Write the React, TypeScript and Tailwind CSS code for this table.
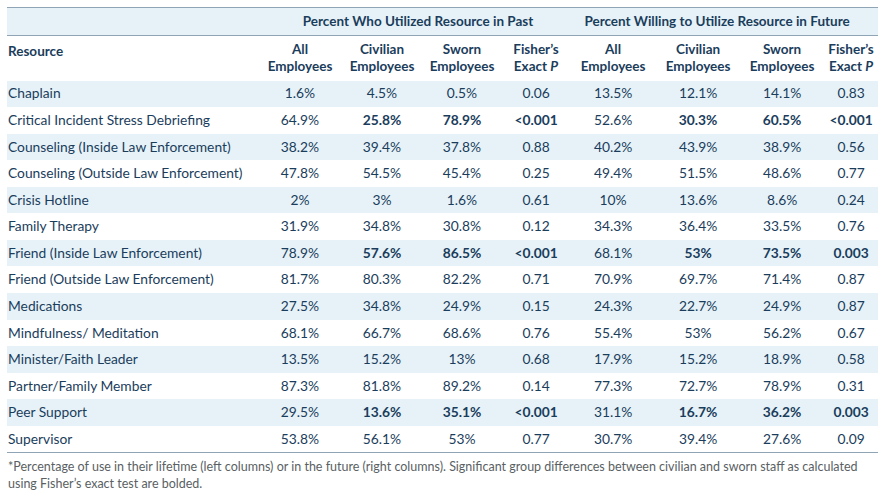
const rows: [string, string[], boolean][] = [
  ["Chaplain", ["1.6%", "4.5%", "0.5%", "0.06", "13.5%", "12.1%", "14.1%", "0.83"], false],
  ["Critical Incident Stress Debriefing", ["64.9%", "25.8%", "78.9%", "<0.001", "52.6%", "30.3%", "60.5%", "<0.001"], true],
  ["Counseling (Inside Law Enforcement)", ["38.2%", "39.4%", "37.8%", "0.88", "40.2%", "43.9%", "38.9%", "0.56"], false],
  ["Counseling (Outside Law Enforcement)", ["47.8%", "54.5%", "45.4%", "0.25", "49.4%", "51.5%", "48.6%", "0.77"], false],
  ["Crisis Hotline", ["2%", "3%", "1.6%", "0.61", "10%", "13.6%", "8.6%", "0.24"], false],
  ["Family Therapy", ["31.9%", "34.8%", "30.8%", "0.12", "34.3%", "36.4%", "33.5%", "0.76"], false],
  ["Friend (Inside Law Enforcement)", ["78.9%", "57.6%", "86.5%", "<0.001", "68.1%", "53%", "73.5%", "0.003"], true],
  ["Friend (Outside Law Enforcement)", ["81.7%", "80.3%", "82.2%", "0.71", "70.9%", "69.7%", "71.4%", "0.87"], false],
  ["Medications", ["27.5%", "34.8%", "24.9%", "0.15", "24.3%", "22.7%", "24.9%", "0.87"], false],
  ["Mindfulness/ Meditation", ["68.1%", "66.7%", "68.6%", "0.76", "55.4%", "53%", "56.2%", "0.67"], false],
  ["Minister/Faith Leader", ["13.5%", "15.2%", "13%", "0.68", "17.9%", "15.2%", "18.9%", "0.58"], false],
  ["Partner/Family Member", ["87.3%", "81.8%", "89.2%", "0.14", "77.3%", "72.7%", "78.9%", "0.31"], false],
  ["Peer Support", ["29.5%", "13.6%", "35.1%", "<0.001", "31.1%", "16.7%", "36.2%", "0.003"], true],
  ["Supervisor", ["53.8%", "56.1%", "53%", "0.77", "30.7%", "39.4%", "27.6%", "0.09"], false],
];

function Head({ top, bottom }: { top: string; bottom: React.ReactNode }) {
  return (
    <th className="text-center font-bold align-middle leading-[17px] text-[13.5px]">
      {top}
      <br />
      {bottom}
    </th>
  );
}

export default function App() {
  return (
    <div className="bg-white w-[886px] h-[500px] pt-[7px] pl-[7px] text-[#1b3d5c]" style={{ fontFamily: "Lato, 'Noto Sans', sans-serif" }}>
      <table className="table-fixed border-collapse w-[871px] text-[13.8px]">
        <colgroup>
          <col className="w-[251px]" />
          <col className="w-[84px]" />
          <col className="w-[80px]" />
          <col className="w-[80px]" />
          <col className="w-[68px]" />
          <col className="w-[86px]" />
          <col className="w-[84px]" />
          <col className="w-[84px]" />
          <col className="w-[54px]" />
        </colgroup>
        <thead>
          <tr className="h-[28px] bg-[#e6f2f8] border-y border-[#8fa4b4] text-[13.5px]">
            <th />
            <th colSpan={4} className="font-bold text-center pl-[8px]">Percent Who Utilized Resource in Past</th>
            <th colSpan={4} className="font-bold text-center pr-[14px]">Percent Willing to Utilize Resource in Future</th>
          </tr>
          <tr className="h-[45px]">
            <th className="text-left font-bold pl-[1px] pb-[14px] text-[13.5px]">Resource</th>
            <Head top="All" bottom="Employees" />
            <Head top="Civilian" bottom="Employees" />
            <Head top="Sworn" bottom="Employees" />
            <Head top="Fisher’s" bottom={<>Exact <i>P</i></>} />
            <Head top="All" bottom="Employees" />
            <Head top="Civilian" bottom="Employees" />
            <Head top="Sworn" bottom="Employees" />
            <Head top="Fisher’s" bottom={<>Exact <i>P</i></>} />
          </tr>
        </thead>
        <tbody className="border-b border-[#8fa4b4]">
          {rows.map(([name, vals, bold], i) => (
            <tr key={name} className={`h-[26.57px] ${i % 2 === 0 ? "bg-[#e6f2f8]" : "bg-white"}`}>
              <td className="pl-[1px]">{name}</td>
              {vals.map((v, j) => (
                <td key={j} className={`text-center ${bold && j !== 0 && j !== 4 ? "font-bold" : ""}`}>{v}</td>
              ))}
            </tr>
          ))}
        </tbody>
      </table>
      <p className="mt-[5px] pl-[1px] w-[875px] text-[12.5px] leading-[17px] text-[#5a5f64]">
        *Percentage of use in their lifetime (left columns) or in the future (right columns). Significant group differences between civilian and sworn staff as calculated using Fisher’s exact test are bolded.
      </p>
    </div>
  );
}
